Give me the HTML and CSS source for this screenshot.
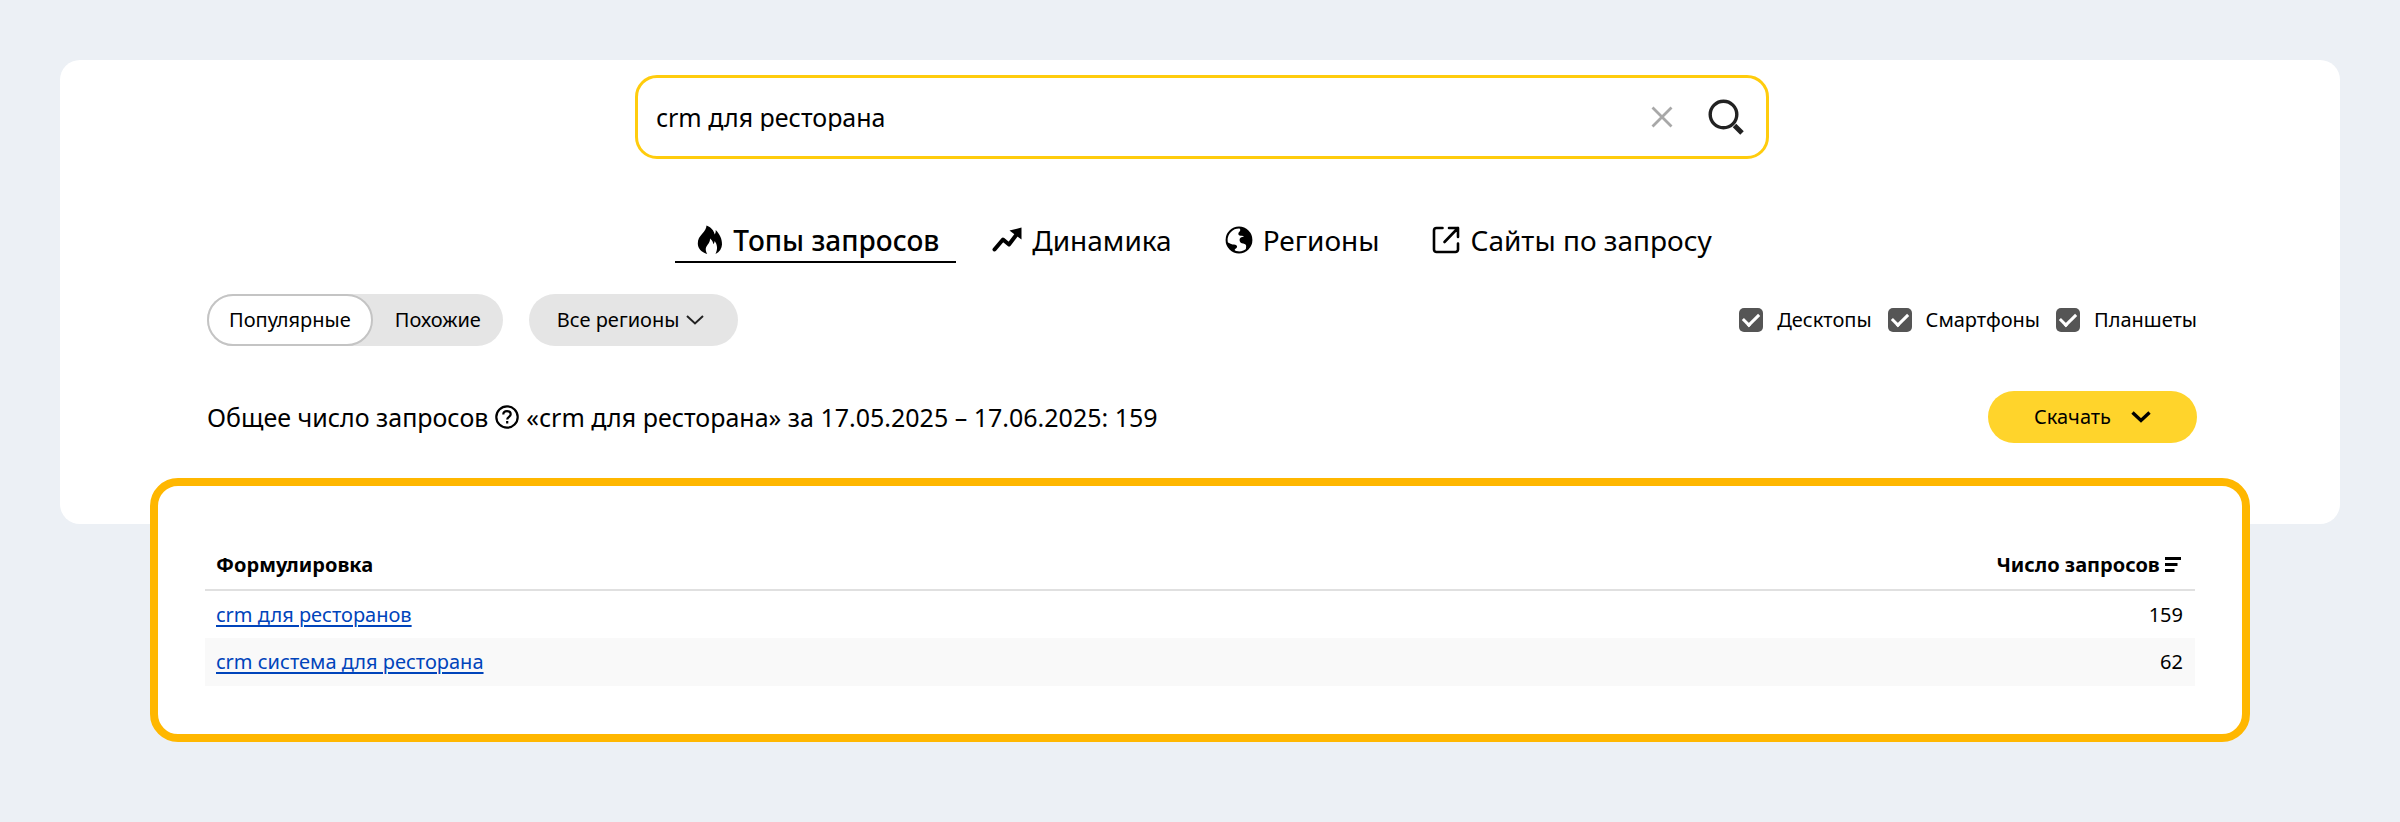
FILE: index.html
```html
<!DOCTYPE html>
<html lang="ru">
<head>
    <meta charset="UTF-8">
    <meta name="viewport" content="width=device-width, initial-scale=1.0">
    <title>Топы запросов</title>
    <link rel="stylesheet" href="styles.css">
</head>
<body>

    <main class="page">
        <section class="panel">

            <!-- Search -->
            <form class="search">
                <input class="search-input" type="text" name="query" value="crm для ресторана" aria-label="Запрос">
                <button class="search-button" type="reset" aria-label="Очистить">
                    <svg width="22" height="22" viewBox="0 0 22 22" fill="none" stroke="#a8a8a8" stroke-width="2.8">
                        <path d="M1.5 1.5l19 19M20.5 1.5l-19 19"/>
                    </svg>
                </button>
                <button class="search-button" type="submit" aria-label="Найти">
                    <svg width="36" height="36" viewBox="0 0 36 36" fill="none" stroke="#222">
                        <circle cx="15.5" cy="15.5" r="13.3" stroke-width="3.4"/>
                        <path d="M26.5 26.5l7.5 7.500" stroke-width="5"/>
                    </svg>
                </button>
            </form>

            <!-- Tabs -->
            <nav class="tabs">
                <a href="#" class="tab tab-active">
                    <svg width="26" height="30" viewBox="0 0 26 30">
                        <path d="M9.5 .5c4.5 1.800 7.500 5 8.200 9 .8-1.200 1.200-2.700 1-4.500 4 4 6.500 9 6.300 14.500-.2 4-2.300 7.300-6.500 9.500 1-2.300 1.700-4.600 1.500-7-.2-2.200-1-4.200-2.300-6-.2 1.400-.6 2.400-1.400 3.200-.3-2.200-1.300-4.300-3.300-5.700.2 2.500-.8 4.200-2.200 6-1.500 2-2.300 3.500-2 5.700.2 1.500.7 2.800 1.400 3.800C4.500 27.300.8 23.600.8 18.500c0-4.300 1.800-6.700 4.400-9.700C7.700 6 9.300 3.800 9.500.5z"/>
                    </svg>
                    Топы запросов
                </a>
                <a href="#" class="tab">
                    <svg width="30" height="26" viewBox="0 0 30 26">
                        <path d="M2.500 22.500l8.500-10 6 5L25 7" fill="none" stroke="#000" stroke-width="4" stroke-linecap="round" stroke-linejoin="round"/>
                        <path d="M17.500 3.500L29.500.5v12z"/>
                    </svg>
                    Динамика
                </a>
                <a href="#" class="tab">
                    <svg width="28" height="28" viewBox="0 0 28 28">
                        <circle cx="14" cy="14" r="12.400" fill="none" stroke="#000" stroke-width="2"/>
                        <path d="M14.500 2c6.500-.3 12 5 12 12 0 4.500-2.300 8-5.500 10-.5-2 .8-3.500-.2-5.300-1.300-1.500-3.800-.7-5.300-2.200-1.200-1.500-1.300-3.500 0-4.700 1-.8 2.500-.8 3.500-1.300-1-.8-3-.3-4.500-1-2-1-1-3 .3-4.200.8-1 .5-2.300-.3-3.300z"/>
                        <path d="M2 16.500c2.500.2 3.500 1.700 5.500 2 2 .2 4 0 4.500 1.700.5 2-2.500 2.300-2.300 4.300 1.300 1 3.800.7 5.300 2C8 27.500 2.500 22.500 2 16.500z"/>
                    </svg>
                    Регионы
                </a>
                <a href="#" class="tab">
                    <svg width="28" height="28" viewBox="0 0 28 28" fill="none" stroke="#000" stroke-width="2.600" stroke-linecap="round" stroke-linejoin="round">
                        <path d="M10.500 2H4.500A2.500 2.500 0 0 0 2 4.500v19A2.500 2.500 0 0 0 4.500 26h19a2.500 2.500 0 0 0 2.500-2.500v-6M17 2h9v9M26 2L12.500 16"/>
                    </svg>
                    Сайты по запросу
                </a>
            </nav>

            <!-- Filters -->
            <div class="filters">
                <div class="switcher">
                    <button type="button" class="switch switch-active">Популярные</button>
                    <button type="button" class="switch">Похожие</button>
                </div>
                <button type="button" class="regions">
                    Все регионы
                    <svg width="18" height="10" viewBox="0 0 18 10" fill="none" stroke="#222" stroke-width="2">
                        <path d="M1 1l8 7.500L17 1"/>
                    </svg>
                </button>
                <div class="devices">
                    <label class="device"><input type="checkbox" checked>Десктопы</label>
                    <label class="device"><input type="checkbox" checked>Смартфоны</label>
                    <label class="device"><input type="checkbox" checked>Планшеты</label>
                </div>
            </div>

            <!-- Total -->
            <div class="total">
                <p class="total-text">
                    Общее число запросов
                    <svg width="24" height="24" viewBox="0 0 24 24" fill="none" stroke="#000" stroke-width="2.200">
                        <circle cx="12" cy="12" r="10.700"/>
                        <path d="M8.300 9.600c0-2.200 1.600-3.500 3.700-3.500s3.700 1.300 3.700 3.200c0 2.400-3.500 2.600-3.500 5.200M12.200 16v2.400"/>
                    </svg>
                    «crm для ресторана» за 17.05.2025 – 17.06.2025: 159
                </p>
                <button type="button" class="download">
                    Скачать
                    <svg width="20" height="12" viewBox="0 0 20 12" fill="none" stroke="#000" stroke-width="3.400">
                        <path d="M1.500 1.500L10 9.500l8.500-8"/>
                    </svg>
                </button>
            </div>
        </section>

        <!-- Results -->
        <section class="results">
            <table class="results-table">
                <thead>
                    <tr>
                        <th>Формулировка</th>
                        <th class="count">
                            Число запросов
                            <svg width="17" height="15" viewBox="0 0 17 15" stroke="#000" stroke-width="3">
                                <path d="M0 1.500h16M0 7.500h12.500M0 13.500h9.500"/>
                            </svg>
                        </th>
                    </tr>
                </thead>
                <tbody>
                    <tr>
                        <td><a href="#">crm для ресторанов</a></td>
                        <td class="count">159</td>
                    </tr>
                    <tr>
                        <td><a href="#">crm система для ресторана</a></td>
                        <td class="count">62</td>
                    </tr>
                </tbody>
            </table>
        </section>
    </main>

</body>
</html>
```

FILE: styles.css
```css
* {
    box-sizing: border-box;
}
body {
    margin: 0;
    background-color: #ecf0f5;
    color: #000;
    font-family: "Noto Sans", "Open Sans", sans-serif;
    font-size: 20px;
    line-height: 28px;
}
button, input {
    font: inherit;
    color: inherit;
}
button {
    border: none;
    background: none;
    padding: 0;
    cursor: pointer;
}
svg {
    flex: none;
}
.page {
    padding: 60px;
}
.panel {
    padding: 15px 143px 81px 147px;
    border-radius: 20px;
    background-color: #fff;
}

/* Search */
.search {
    display: flex;
    align-items: center;
    max-width: 1134px;
    height: 84px;
    margin: 0 auto;
    padding: 0 22px 0 18px;
    border: 3px solid #ffcc0d;
    border-radius: 22px;
}
.search-input {
    flex: 1;
    min-width: 0;
    padding: 0;
    border: none;
    outline: none;
    background: none;
    font-size: 25px;
}
.search-button {
    display: flex;
    margin-left: 35px;
}

/* Tabs */
.tabs {
    display: flex;
    justify-content: center;
    gap: 14px;
    margin-top: 59px;
}
.tab {
    display: flex;
    align-items: center;
    gap: 10px;
    height: 45px;
    padding: 0 17px 0 22px;
    border-bottom: 2px solid transparent;
    color: #000;
    font-size: 28px;
    text-decoration: none;
    white-space: nowrap;
}
.tab-active {
    border-bottom-color: #000;
    font-weight: 500;
}

/* Filters */
.filters {
    display: flex;
    align-items: center;
    margin-top: 31px;
}
.switcher {
    display: flex;
    border-radius: 26px;
    background-color: #e5e5e5;
}
.switch {
    height: 52px;
    padding: 0 20px;
    border: 2px solid transparent;
    border-radius: 26px;
}
.switch-active {
    border-color: #c4c4c4;
    background-color: #fff;
}
.regions {
    display: flex;
    align-items: center;
    gap: 7px;
    height: 52px;
    margin-left: 26px;
    padding: 0 34px 0 28px;
    border-radius: 26px;
    background-color: #e5e5e5;
}
.devices {
    display: flex;
    gap: 16px;
    margin-left: auto;
}
.device {
    display: flex;
    align-items: center;
    gap: 14px;
}
.device input {
    appearance: none;
    display: grid;
    place-items: center;
    width: 24px;
    height: 24px;
    margin: 0;
    border-radius: 5px;
    background-color: #555;
}
.device input:checked::before {
    content: "";
    width: 7px;
    height: 13px;
    margin-bottom: 4px;
    border: solid #fff;
    border-width: 0 3px 3px 0;
    transform: rotate(45deg);
}

/* Total */
.total {
    display: flex;
    align-items: center;
    justify-content: space-between;
    margin-top: 45px;
}
.total-text {
    display: flex;
    align-items: center;
    gap: 7px;
    margin: 0;
    font-size: 25px;
}
.download {
    display: flex;
    align-items: center;
    justify-content: center;
    gap: 20px;
    width: 209px;
    height: 52px;
    border-radius: 26px;
    background-color: #ffd42b;
}

/* Results */
.results {
    margin: -46px 90px 0;
    padding: 54px 47px 48px;
    border: 8px solid #ffb700;
    border-radius: 28px;
    background-color: #fff;
    position: relative;
}
.results-table {
    width: 100%;
    border-collapse: collapse;
}
.results-table th {
    height: 50px;
    padding: 0 13px 0 11px;
    border-bottom: 2px solid #e0e0e0;
    font-weight: 700;
    text-align: left;
}
.results-table td {
    height: 48px;
    padding: 0 12px 0 11px;
}
.results-table tbody tr:nth-child(even) {
    background-color: #f9f9f9;
}
.results-table .count {
    text-align: right;
}
.results-table a {
    color: #04b;
    text-underline-offset: 3px;
}
```
